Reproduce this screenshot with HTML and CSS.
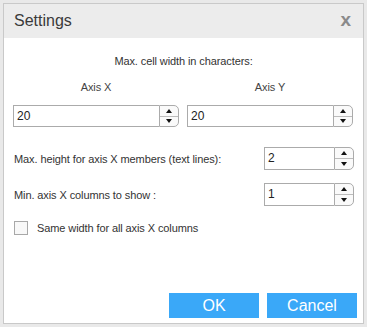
FILE: index.html
```html
<!DOCTYPE html>
<html>
<head>
<meta charset="utf-8">
<link rel="stylesheet" href="styles.css">
</head>
<body>
<div class="dialog">
  <div class="header">
    <span class="title">Settings</span>
    <span class="close">x</span>
  </div>
  <div class="content">
    <div class="caption">Max. cell width in characters:</div>
    <div class="axes">
      <div class="axis">
        <div class="axis-label">Axis X</div>
        <div class="spin wide"><div class="field">20</div><div class="arrows"><span class="up"></span><span class="down"></span></div></div>
      </div>
      <div class="axis">
        <div class="axis-label">Axis Y</div>
        <div class="spin wide"><div class="field">20</div><div class="arrows"><span class="up"></span><span class="down"></span></div></div>
      </div>
    </div>
    <div class="row first">
      <span class="label">Max. height for axis X members (text lines):</span>
      <div class="spin small"><div class="field">2</div><div class="arrows"><span class="up"></span><span class="down"></span></div></div>
    </div>
    <div class="row">
      <span class="label">Min. axis X columns to show :</span>
      <div class="spin small"><div class="field">1</div><div class="arrows"><span class="up"></span><span class="down"></span></div></div>
    </div>
    <label class="check"><span class="box"></span><span>Same width for all axis X columns</span></label>
  </div>
  <div class="footer">
    <button class="btn">OK</button>
    <button class="btn">Cancel</button>
  </div>
</div>
</body>
</html>
```
FILE: styles.css
```css
html, body { margin: 0; padding: 0; }
body {
  background: #e9e9e9;
  width: 367px;
  height: 327px;
  padding: 3px;
  box-sizing: border-box;
  font-family: "Liberation Sans", Arial, sans-serif;
  color: #333;
}
.dialog {
  width: 361px;
  height: 321px;
  box-sizing: border-box;
  border: 1px solid #c9c9c9;
  background: #fff;
  display: flex;
  flex-direction: column;
}
.header {
  height: 34px;
  background: #ececec;
  display: flex;
  align-items: center;
  justify-content: space-between;
  padding: 0 12px 0 10px;
}
.title { font-size: 16px; color: #3a3a3a; }
.close { font-size: 19px; font-weight: bold; color: #8a8a8a; line-height: 1; margin-top: -3px; }
.content {
  flex: 1;
  padding: 16px 9px 0 9px;
  font-size: 11px;
  letter-spacing: -0.1px;
}
.caption { text-align: center; line-height: 14px; }
.axes { display: grid; grid-template-columns: 166px 166px; column-gap: 8px; margin-top: 12px; }
.axis-label { text-align: center; line-height: 14px; color: #444; }
.spin { display: flex; height: 22px; }
.axis .spin { margin-top: 11px; }
.field {
  flex: 1;
  border: 1px solid #ababab;
  border-right: none;
  font-size: 12px;
  line-height: 20px;
  padding-left: 3px;
  color: #222;
  letter-spacing: 0;
}
.arrows {
  width: 18px;
  border: 1px solid #ababab;
  border-radius: 0 5px 5px 0;
  display: flex;
  flex-direction: column;
  background: #fafafa;
}
.arrows span { flex: 1; display: flex; align-items: center; justify-content: center; }
.arrows .up { border-bottom: 1px solid #bcbcbc; }
.arrows .up::after { content: ""; border-left: 3px solid transparent; border-right: 3px solid transparent; border-bottom: 4px solid #111; }
.arrows .down::after { content: ""; border-left: 3px solid transparent; border-right: 3px solid transparent; border-top: 4px solid #111; }
.row { display: flex; align-items: center; justify-content: space-between; margin-top: 13px; padding-left: 1px; }
.row.first { margin-top: 20px; }
.row .spin { width: 90px; height: 23px; }
.row .field { line-height: 21px; }
.check { display: flex; align-items: center; gap: 9px; margin-top: 15px; padding-left: 1px; }
.box { width: 12px; height: 12px; border: 1px solid #a8a8a8; background: #f8f8f8; }
.footer { display: flex; justify-content: flex-end; gap: 8px; padding: 0 6px 5px 0; }
.btn {
  width: 90px;
  height: 25px;
  border: none;
  background: #3aa8f8;
  color: #fff;
  font-family: "Liberation Sans", Arial, sans-serif;
  font-size: 16px;
  padding: 0;
}
```
